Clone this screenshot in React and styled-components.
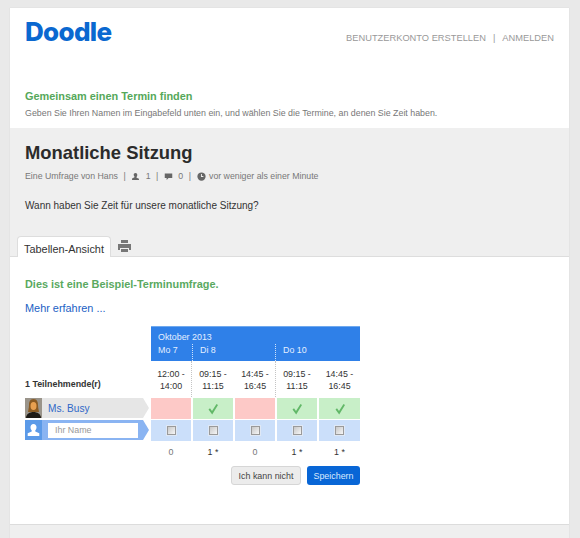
import React from "react";
import styled, { createGlobalStyle } from "styled-components";

const Global = createGlobalStyle`
  html, body { margin: 0; padding: 0; background: #e9e9e9; }
  body { font-family: "Liberation Sans", Arial, sans-serif; color: #333; height: 538px; overflow: hidden; }
`;
const Page = styled.div`
  padding: 8px 11px 0 10px;
  height: 530px;
  overflow: hidden;
`;
const Card = styled.div`
  background: #fff;
  height: 530px;
  display: flex;
  flex-direction: column;
  box-shadow: 0 0 1px #d0d0d0;
`;
const Header = styled.header`
  height: 120px;
  box-sizing: border-box;
  padding: 0 15px;
  display: flex;
  flex-direction: column;
`;
const TopRow = styled.div`
  display: flex;
  justify-content: space-between;
  align-items: flex-start;
  height: 81px;
`;
const Logo = styled.div`
  font-family: Inter, "Liberation Sans", sans-serif;
  font-weight: 800;
  font-size: 26px;
  letter-spacing: -0.7px;
  line-height: 30px;
  margin-top: 9px;
  color: #0a68d0;
`;
const Nav = styled.nav`
  margin-top: 24px;
  font-size: 9.3px;
  line-height: 12px;
  color: #999;
  display: flex;
  gap: 7px;
`;
const Lead = styled.h2`
  margin: 0;
  font-size: 10.9px;
  line-height: 14px;
  font-weight: 700;
  color: #55a85a;
`;
const LeadText = styled.p`
  margin: 4px 0 0;
  font-size: 8.85px;
  line-height: 12px;
  color: #777;
`;
const Band = styled.section`
  height: 129px;
  box-sizing: border-box;
  background: #efefef;
  border-bottom: 1px solid #ddd;
  padding: 13px 0 0 0;
  display: flex;
  flex-direction: column;
`;
const Title = styled.h1`
  margin: 0 15px;
  font-size: 18.4px;
  line-height: 23px;
  font-weight: 700;
  color: #2b2b2b;
`;
const Meta = styled.div`
  margin: 6px 15px 0;
  font-size: 8.75px;
  line-height: 12px;
  color: #777;
  display: flex;
  align-items: center;
  gap: 5.5px;
`;
const MetaIcon = styled.svg`
  width: 9px;
  height: 9px;
  fill: #666;
  flex: none;
  margin-right: ${p => p.$tight ? "-2px" : "0"};
`;
const Question = styled.p`
  margin: 17px 15px 0;
  font-size: 10px;
  line-height: 14px;
  color: #333;
`;
const Tabs = styled.div`
  margin: auto 0 -1px 7px;
  display: flex;
  align-items: center;
  gap: 6px;
`;
const Tab = styled.div`
  height: 21px;
  width: 94px;
  box-sizing: border-box;
  background: #fff;
  border: 1px solid #ddd;
  border-bottom: 0;
  border-radius: 4px 4px 0 0;
  font-size: 10.9px;
  line-height: 24px;
  text-align: center;
  white-space: nowrap;
  color: #333;
`;
const PrintIcon = styled.svg`
  width: 15px;
  height: 14px;
  fill: #777;
  margin-top: -2px;
`;
const Content = styled.main`
  flex: 1;
  min-height: 0;
  padding: 20px 15px 0;
  display: flex;
  flex-direction: column;
`;
const Notice = styled.h3`
  margin: 0;
  font-size: 10.9px;
  line-height: 14px;
  font-weight: 700;
  color: #5aa95f;
`;
const More = styled.a`
  margin-top: 10px;
  font-size: 10.9px;
  line-height: 14px;
  color: #1c5fc4;
`;
const Poll = styled.div`
  margin-top: 11px;
  display: grid;
  grid-template-columns: 124px 40px 40px 40px 40px 41px;
  grid-template-rows: 35px 36px 22px 22px 22px;
  column-gap: 2px;
`;
const HeadBlock = styled.div`
  grid-column: 2 / span 5;
  grid-row: 1;
  background: #2f80e8;
  border-top: 1px solid #6fa9ee;
  color: #e3efff;
  font-size: 8.9px;
  line-height: 13px;
  display: flex;
  flex-direction: column;
  box-sizing: border-box;
  padding-top: 4px;
`;
const Month = styled.div`
  padding-left: 7px;
  height: 13px;
`;
const Days = styled.div`
  display: flex;
  flex: 1;
`;
const Day = styled.div`
  width: ${p => p.$w}px;
  box-sizing: border-box;
  padding-left: 7px;
  ${p => p.$line && "border-right: 1px dotted #cfe2fb;"}
`;
const Participants = styled.div`
  grid-column: 1;
  grid-row: 2;
  align-self: end;
  font-size: 8.9px;
  font-weight: 700;
  line-height: 12px;
  color: #333;
  padding-bottom: 7px;
`;
const Time = styled.div`
  grid-row: 2;
  font-size: 8.9px;
  line-height: 12px;
  color: #333;
  text-align: center;
  padding-top: 7px;
  box-sizing: border-box;
  ${p => p.$line && "border-right: 1px dotted #c4c4c4;"}
  width: ${p => p.$line ? "41px" : "auto"};
`;
const NameCell = styled.div`
  grid-column: 1;
  grid-row: ${p => p.$row};
  position: relative;
  height: 20px;
  margin-top: 1px;
  width: 118px;
  background: ${p => p.$bg};
  display: flex;
  align-items: center;
  &::after {
    content: "";
    position: absolute;
    left: 100%;
    top: 0;
    border-left: 6px solid ${p => p.$bg};
    border-top: 10px solid transparent;
    border-bottom: 10px solid transparent;
  }
`;
const Avatar = styled.svg`
  width: 17px;
  height: 20px;
  flex: none;
`;
const NameLink = styled.span`
  margin-left: 6px;
  font-size: 10.1px;
  color: #2f68c8;
`;
const NameInput = styled.div`
  margin-left: 6px;
  width: 90px;
  height: 15px;
  background: #fff;
  box-sizing: border-box;
  padding-left: 7px;
  font-size: 8.9px;
  line-height: 15px;
  color: #999;
`;
const Cell = styled.div`
  grid-row: ${p => p.$row};
  margin-top: 1px;
  height: 21px;
  background: ${p => p.$bg};
  display: flex;
  align-items: center;
  justify-content: center;
`;
const Check = styled.svg`
  width: 12px;
  height: 12px;
  fill: #62b868;
`;
const Box = styled.span`
  width: 9px;
  height: 9px;
  box-sizing: border-box;
  border: 1px solid #9a9a9a;
  background: linear-gradient(135deg, #c8c8c8, #f6f6f6);
  box-shadow: 0 0 0 1px #dfe8f5;
`;
const Count = styled.div`
  grid-row: 5;
  grid-column: ${p => p.$col};
  text-align: center;
  font-size: 8.9px;
  line-height: 12px;
  padding-top: 5px;
  color: ${p => p.$on ? "#333" : "#777"};
`;
const Actions = styled.div`
  margin-top: 3px;
  margin-left: 206px;
  display: flex;
  gap: 6px;
`;
const GreyButton = styled.button`
  width: 70px;
  height: 19px;
  padding: 0;
  border: 1px solid #d6d6d6;
  border-radius: 3px;
  background: #ececec;
  color: #444;
  font: 8.9px "Liberation Sans", sans-serif;
`;
const BlueButton = styled.button`
  width: 53px;
  height: 19px;
  padding: 0;
  border: 0;
  border-radius: 3px;
  background: #0866d6;
  color: #dbeaff;
  font: 8.9px "Liberation Sans", sans-serif;
`;
const Footer = styled.footer`
  height: 13px;
  background: #efefef;
  border-top: 1px solid #dcdcdc;
`;

const slots = [
  ["12:00 -", "14:00", "0"],
  ["09:15 -", "11:15", "1 *"],
  ["14:45 -", "16:45", "0"],
  ["09:15 -", "11:15", "1 *"],
  ["14:45 -", "16:45", "1 *"],
];

const PersonPath = "M6 1.2c1.5 0 2.4 1.2 2.4 2.8 0 1-.4 2-1 2.5v1l3.2 1.5v1.6H1.4V8.5l3.2-1.5v-1c-.6-.5-1-1.500-1-2.500C3.600 2.400 4.500 1.200 6 1.200z";

export default function App() {
  return (
    <>
      <Global />
      <Page>
        <Card>
          <Header>
            <TopRow>
              <Logo>Doodle</Logo>
              <Nav>
                <span>BENUTZERKONTO ERSTELLEN</span>
                <span>|</span>
                <span>ANMELDEN</span>
              </Nav>
            </TopRow>
            <Lead>Gemeinsam einen Termin finden</Lead>
            <LeadText>Geben Sie Ihren Namen im Eingabefeld unten ein, und wählen Sie die Termine, an denen Sie Zeit haben.</LeadText>
          </Header>
          <Band>
            <Title>Monatliche Sitzung</Title>
            <Meta>
              <span>Eine Umfrage von Hans</span>
              <span>|</span>
              <MetaIcon viewBox="0 0 12 12"><path d={PersonPath} /></MetaIcon>
              <span>1</span>
              <span>|</span>
              <MetaIcon viewBox="0 0 12 12"><path d="M1 2h10v6H6l-2.500 2.500V8H1z" /></MetaIcon>
              <span>0</span>
              <span>|</span>
              <MetaIcon $tight viewBox="0 0 12 12"><path fillRule="evenodd" d="M6 .5a5.500 5.500 0 1 1 0 11 5.500 5.500 0 0 1 0-11zM5.300 2.500v4h3.200v-1.200H6.500V2.500z" /></MetaIcon>
              <span>vor weniger als einer Minute</span>
            </Meta>
            <Question>Wann haben Sie Zeit für unsere monatliche Sitzung?</Question>
            <Tabs>
              <Tab>Tabellen-Ansicht</Tab>
              <PrintIcon viewBox="0 0 15 14"><path d="M4 1h7v3H4zM1 5h13v6h-2V9H3v2H1zM4 10h7v3H4z" /></PrintIcon>
            </Tabs>
          </Band>
          <Content>
            <Notice>Dies ist eine Beispiel-Terminumfrage.</Notice>
            <More>Mehr erfahren ...</More>
            <Poll>
              <HeadBlock>
                <Month>Oktober 2013</Month>
                <Days>
                  <Day $w={42} $line>Mo 7</Day>
                  <Day $w={83} $line>Di 8</Day>
                  <Day $w={84}>Do 10</Day>
                </Days>
              </HeadBlock>
              <Participants>1 Teilnehmende(r)</Participants>
              {slots.map((s, i) => (
                <Time key={i} $line={i === 0 || i === 2}>{s[0]}<br />{s[1]}</Time>
              ))}
              <NameCell $row={3} $bg="#e6e6e6">
                <Avatar viewBox="0 0 17 20">
                  <rect width="17" height="20" fill="#9a948a" />
                  <path d="M8.500 1c3.500 0 4.500 3 4.500 6s1 6 1 7H3c0-1 1-4 1-7s1-6 4.500-6z" fill="#8a5a22" />
                  <ellipse cx="8.500" cy="8" rx="3" ry="4" fill="#e8a050" />
                  <path d="M1 20c0-4 4-6 7.500-6S16 16 16 20z" fill="#1d1a16" />
                </Avatar>
                <NameLink>Ms. Busy</NameLink>
              </NameCell>
              {[0, 1, 0, 1, 1].map((ok, i) => (
                <Cell key={i} $row={3} $bg={ok ? "#c8efc8" : "#fdc9c7"}>
                  {ok ? <Check viewBox="0 0 12 12"><path d="M1.500 6.500 3 5.300l2 2.600L9.500 1 11 2 5.200 11.500z" /></Check> : null}
                </Cell>
              ))}
              <NameCell $row={4} $bg="#8ab4f2">
                <Avatar viewBox="0 0 17 20">
                  <rect width="17" height="20" fill="#5b9ae8" />
                  <path d="M8.500 4c1.900 0 3 1.400 3 3.300 0 1.200-.5 2.300-1.200 3v1.200l4 1.800V16H2.700v-2.700l4-1.800v-1.200c-.7-.7-1.200-1.800-1.200-3C5.500 5.400 6.600 4 8.500 4z" fill="#fff" />
                </Avatar>
                <NameInput>Ihr Name</NameInput>
              </NameCell>
              {slots.map((_, i) => (
                <Cell key={i} $row={4} $bg="#cbdffa"><Box /></Cell>
              ))}
              {slots.map((s, i) => (
                <Count key={i} $col={i + 2} $on={s[2] !== "0"}>{s[2]}</Count>
              ))}
            </Poll>
            <Actions>
              <GreyButton>Ich kann nicht</GreyButton>
              <BlueButton>Speichern</BlueButton>
            </Actions>
          </Content>
          <Footer />
        </Card>
      </Page>
    </>
  );
}
